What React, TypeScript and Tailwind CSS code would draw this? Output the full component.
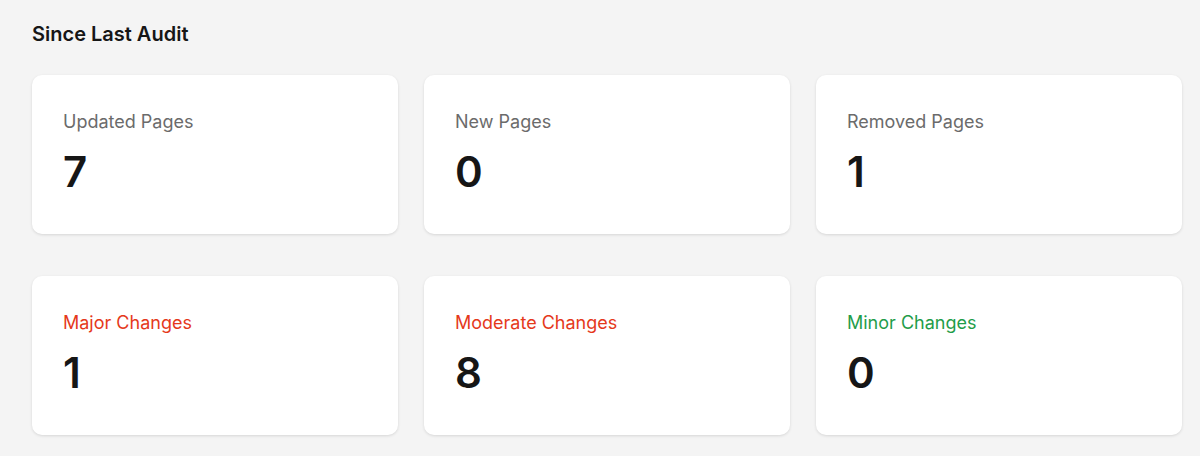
const stats = [
  { label: 'Updated Pages', value: 7, tone: 'text-[#6b6b6b]' },
  { label: 'New Pages', value: 0, tone: 'text-[#6b6b6b]' },
  { label: 'Removed Pages', value: 1, tone: 'text-[#6b6b6b]' },
  { label: 'Major Changes', value: 1, tone: 'text-[#e5391b]' },
  { label: 'Moderate Changes', value: 8, tone: 'text-[#e5391b]' },
  { label: 'Minor Changes', value: 0, tone: 'text-[#1f9d4a]' },
]

export default function App() {
  return (
    <div className="min-h-[456px] bg-[#f4f4f4] pl-[32px] pr-[18px] pt-[22px] font-['Inter',sans-serif] text-[#161616]">
      <h2 className="text-[20px] leading-[25px] font-semibold">Since Last Audit</h2>
      <div className="mt-[28px] grid grid-cols-3 gap-x-[26px] gap-y-[42px]">
        {stats.map((s) => (
          <div
            key={s.label}
            className="h-[159px] rounded-[10px] bg-white pl-[31px] pt-[35px] shadow-[0_1px_3px_rgba(0,0,0,0.12)]"
          >
            <div className={`text-[18px] leading-[24px] ${s.tone}`}>{s.label}</div>
            <div className="mt-[17px] text-[42px] leading-[42px] font-semibold">{s.value}</div>
          </div>
        ))}
      </div>
    </div>
  )
}
